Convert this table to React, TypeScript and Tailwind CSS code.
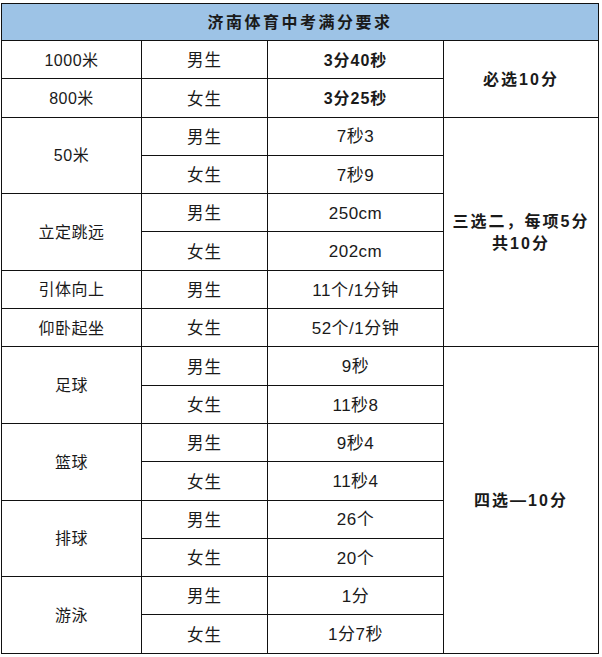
import React from 'react'

const font = { fontFamily: '"Liberation Sans", "Noto Sans CJK SC", sans-serif' }

type Row = { item?: string; span?: number; sex: string; value: string; bold?: boolean; note?: string[]; noteSpan?: number }

const rows: Row[] = [
  { item: '1000米', sex: '男生', value: '3分40秒', bold: true, note: ['必选10分'], noteSpan: 2 },
  { item: '800米', sex: '女生', value: '3分25秒', bold: true },
  { item: '50米', span: 2, sex: '男生', value: '7秒3', note: ['三选二，每项5分', '共10分'], noteSpan: 6 },
  { sex: '女生', value: '7秒9' },
  { item: '立定跳远', span: 2, sex: '男生', value: '250cm' },
  { sex: '女生', value: '202cm' },
  { item: '引体向上', sex: '男生', value: '11个/1分钟' },
  { item: '仰卧起坐', sex: '女生', value: '52个/1分钟' },
  { item: '足球', span: 2, sex: '男生', value: '9秒', note: ['四选—10分'], noteSpan: 8 },
  { sex: '女生', value: '11秒8' },
  { item: '篮球', span: 2, sex: '男生', value: '9秒4' },
  { sex: '女生', value: '11秒4' },
  { item: '排球', span: 2, sex: '男生', value: '26个' },
  { sex: '女生', value: '20个' },
  { item: '游泳', span: 2, sex: '男生', value: '1分' },
  { sex: '女生', value: '1分7秒' },
]

const cell = 'border-[1.5px] border-[#111] text-center align-middle p-0 pt-[2px]'

export default function App() {
  return (
    <div className="h-[657px] w-[602px] bg-white pl-[1px] pt-[3px] text-[16px] text-[#1a1a1a]" style={font}>
      <table className="w-[597px] table-fixed border-collapse">
        <colgroup>
          <col className="w-[140px]" />
          <col className="w-[126px]" />
          <col className="w-[176px]" />
          <col className="w-[155px]" />
        </colgroup>
        <tbody>
          <tr className="h-[37px]">
            <td colSpan={4} className={`${cell} bg-[#9dc3e6] font-bold tracking-[2.5px]`}>
              济南体育中考满分要求
            </td>
          </tr>
          {rows.map((r, i) => (
            <tr key={i} className="h-[38.3px]">
              {r.item && (
                <td rowSpan={r.span ?? 1} className={`${cell} tracking-[0.5px]`}>
                  {r.item}
                </td>
              )}
              <td className={`${cell} text-[16.5px] tracking-[1px]`}>{r.sex}</td>
              <td className={`${cell} ${r.bold ? 'font-bold tracking-[1px]' : 'text-[17px] tracking-[0.5px]'}`}>{r.value}</td>
              {r.note && (
                <td rowSpan={r.noteSpan} className={`${cell} font-bold leading-[22px] tracking-[2px]`}>
                  {r.note.map((l) => (
                    <div key={l}>{l}</div>
                  ))}
                </td>
              )}
            </tr>
          ))}
        </tbody>
      </table>
    </div>
  )
}
